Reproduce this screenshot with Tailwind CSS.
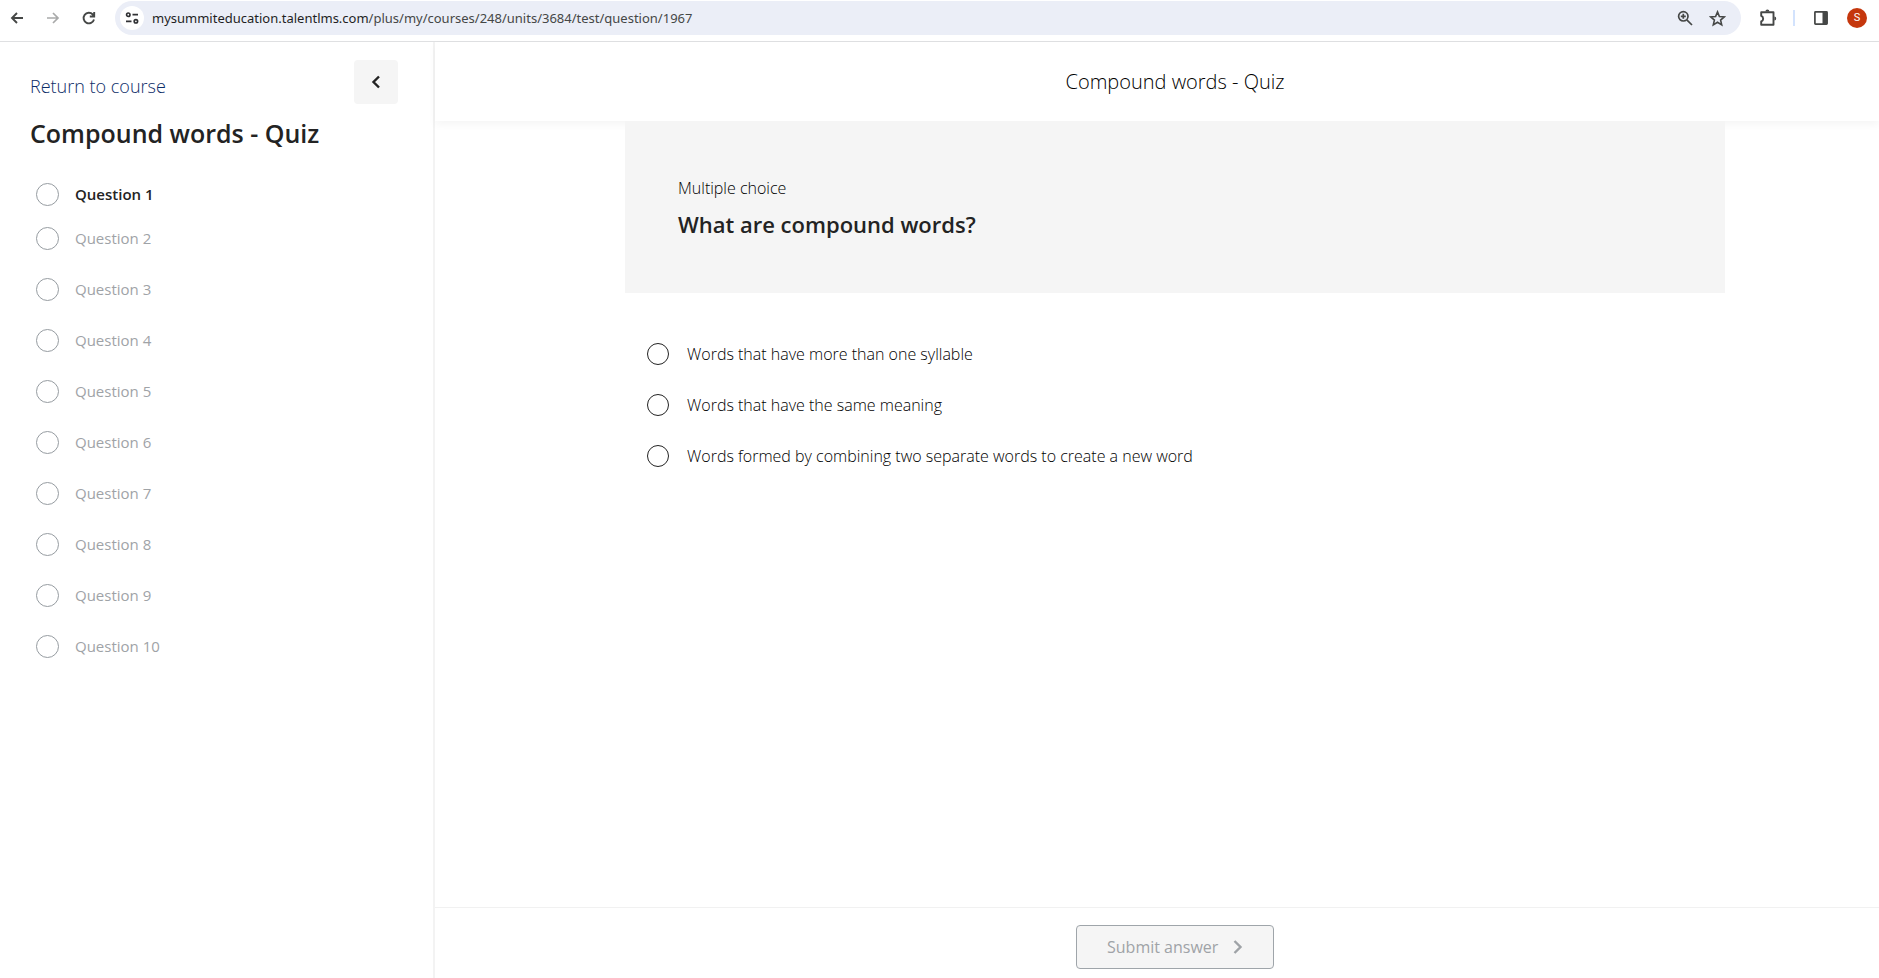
<!DOCTYPE html>
<html lang="en">
<head>
<meta charset="utf-8">
<title>Compound words - Quiz</title>
<script src="https://cdn.jsdelivr.net/npm/@tailwindcss/browser@4"></script>
</head>
<body class="flex h-screen flex-col bg-white font-['Open_Sans',sans-serif] text-[15px] text-[#232323]">
<header class="flex h-[42px] shrink-0 items-start border-b border-[#dfe0e2] pt-px pr-3 text-[#454746]">
  <nav class="flex h-[34px] items-center gap-5 pl-[9px] pr-[18px]" aria-label="Browser">
    <button aria-label="Back"><svg class="size-4" viewBox="0 0 16 16" fill="none" stroke="currentColor" stroke-width="1.9"><path d="M14 8H3M8 3 3 8l5 5"/></svg></button>
    <button aria-label="Forward" class="text-[#a9aaaa]"><svg class="size-4" viewBox="0 0 16 16" fill="none" stroke="currentColor" stroke-width="1.7"><path d="M2 8h11M8 3l5 5-5 5"/></svg></button>
    <button aria-label="Reload"><svg class="size-4" viewBox="0 0 16 16" fill="none" stroke="currentColor" stroke-width="1.9"><path d="M13 9.500A5.300 5.300 0 1 1 11.800 4.500L13 5.800M13.200 2v4.500H8.800"/></svg></button>
  </nav>
  <div class="flex h-[34px] flex-1 items-center rounded-full bg-[#ebeef7] pl-[5px] pr-[15px]">
    <button aria-label="Site information" class="grid size-6 place-items-center rounded-full bg-white"><svg class="h-3 w-[14px]" viewBox="0 0 14 12" fill="none" stroke="#303134" stroke-width="1.7"><circle cx="3.300" cy="2.700" r="1.700"/><path d="M7.500 2.700H13M1 9.300h5.500"/><circle cx="10.900" cy="9.300" r="1.700"/></svg></button>
    <span class="flex-1 pt-px pl-2 font-['Noto_Sans',sans-serif] text-[13px]"><span class="text-[#1f1f1f]">mysummiteducation.talentlms.com</span><span>/plus/my/courses/248/units/3684/test/question/1967</span></span>
    <button aria-label="Zoom" class="mr-4"><svg class="size-4" viewBox="0 0 16 16" fill="none" stroke="currentColor" stroke-width="1.7"><circle cx="6.300" cy="6.300" r="4.700"/><path d="M9.800 9.800 15 15M6.300 3.800v5M3.800 6.300h5"/></svg></button>
    <button aria-label="Bookmark"><svg class="size-[17px]" viewBox="0 0 17 17" fill="none" stroke="currentColor" stroke-width="1.6"><path d="m8.500 1.900 1.900 4.600 4.900.4-3.700 3.200 1.100 4.800-4.200-2.600-4.200 2.600 1.100-4.800L1.700 6.900l4.900-.4Z"/></svg></button>
  </div>
  <div class="flex h-[34px] items-center pl-[18px]">
    <button aria-label="Extensions"><svg class="size-[18px]" viewBox="0 0 18 18" fill="none" stroke="currentColor" stroke-width="1.9" stroke-linejoin="round"><path d="M2.200 3.200h12.300v12.600H2.200v-3.300c2.600-.8 2.600-4.800 0-5.600Z"/><path d="M6.400 2.400a2 1.900 0 0 1 4 0ZM15.400 7.500a1.800 2 0 0 1 0 4Z" fill="currentColor" stroke="none"/></svg></button>
    <span class="ml-4 h-4 w-0.5 bg-[#d3e3fd]"></span>
    <button aria-label="Side panel" class="ml-[18px]"><svg class="size-4" viewBox="0 0 16 16"><rect x="1.900" y="1.900" width="12.200" height="12.200" rx=".6" fill="none" stroke="currentColor" stroke-width="1.7"/><path d="M9.500 2H14v12H9.500Z" fill="currentColor"/></svg></button>
    <button aria-label="Profile" class="ml-[18px] grid size-5 place-items-center rounded-full bg-[#c5370d] font-[Roboto,sans-serif] text-[11px] text-white">S</button>
  </div>
</header>
<div class="flex min-h-0 flex-1">
  <aside class="w-[435px] shrink-0 border-r-2 border-[#f3f3f3] pl-[30px] pr-[35px] pt-[18px]">
    <div class="flex items-start justify-between">
      <a href="#" class="pt-[14px] text-lg leading-6 font-light text-[#0c2c68]">Return to course</a>
      <button aria-label="Collapse sidebar" class="grid size-11 place-items-center rounded bg-[#f5f5f5]"><svg class="h-[14px] w-[10px]" viewBox="0 0 10 14" fill="none" stroke="#232323" stroke-width="2.4"><path d="M8 1.500 2.500 7 8 12.500"/></svg></button>
    </div>
    <h1 class="mt-[11px] text-[25px] leading-9 font-semibold">Compound words - Quiz</h1>
    <ol class="mt-6 pl-[6px] text-[#9fa3a7]">
      <li class="flex h-[38px] items-center"><label class="flex items-center gap-4 font-semibold text-[#232323]"><input type="radio" name="unit" class="size-[23px] appearance-none rounded-full border border-[#969ca1]">Question 1</label></li>
      <li class="flex h-[51px] items-center"><label class="flex items-center gap-4"><input type="radio" name="unit" class="size-[23px] appearance-none rounded-full border border-[#969ca1]">Question 2</label></li>
      <li class="flex h-[51px] items-center"><label class="flex items-center gap-4"><input type="radio" name="unit" class="size-[23px] appearance-none rounded-full border border-[#969ca1]">Question 3</label></li>
      <li class="flex h-[51px] items-center"><label class="flex items-center gap-4"><input type="radio" name="unit" class="size-[23px] appearance-none rounded-full border border-[#969ca1]">Question 4</label></li>
      <li class="flex h-[51px] items-center"><label class="flex items-center gap-4"><input type="radio" name="unit" class="size-[23px] appearance-none rounded-full border border-[#969ca1]">Question 5</label></li>
      <li class="flex h-[51px] items-center"><label class="flex items-center gap-4"><input type="radio" name="unit" class="size-[23px] appearance-none rounded-full border border-[#969ca1]">Question 6</label></li>
      <li class="flex h-[51px] items-center"><label class="flex items-center gap-4"><input type="radio" name="unit" class="size-[23px] appearance-none rounded-full border border-[#969ca1]">Question 7</label></li>
      <li class="flex h-[51px] items-center"><label class="flex items-center gap-4"><input type="radio" name="unit" class="size-[23px] appearance-none rounded-full border border-[#969ca1]">Question 8</label></li>
      <li class="flex h-[51px] items-center"><label class="flex items-center gap-4"><input type="radio" name="unit" class="size-[23px] appearance-none rounded-full border border-[#969ca1]">Question 9</label></li>
      <li class="flex h-[51px] items-center"><label class="flex items-center gap-4"><input type="radio" name="unit" class="size-[23px] appearance-none rounded-full border border-[#969ca1]">Question 10</label></li>
    </ol>
  </aside>
  <main class="flex min-w-0 flex-1 flex-col">
    <h2 class="flex h-[79px] shrink-0 items-center justify-center pl-9 text-xl font-light text-black shadow-[0_4px_8px_rgba(0,0,0,0.04)]">Compound words - Quiz</h2>
    <form id="quiz" class="flex-1 pl-9">
      <div class="mx-auto max-w-[1100px]">
        <div class="relative bg-[#f5f5f5] px-[53px] pt-[55px] pb-[52px]">
          <p class="text-base leading-6 font-light text-black">Multiple choice</p>
          <h3 id="prompt" class="mt-[7px] text-[22px] leading-[34px] font-semibold">What are compound words?</h3>
        </div>
        <fieldset aria-labelledby="prompt" class="flex flex-col gap-[29px] px-[22px] pt-[50px] text-base font-light text-black">
          <label class="flex h-[22px] items-center gap-[18px]"><input type="radio" name="answer" class="size-[22px] appearance-none rounded-full border border-[#232323]">Words that have more than one syllable</label>
          <label class="flex h-[22px] items-center gap-[18px]"><input type="radio" name="answer" class="size-[22px] appearance-none rounded-full border border-[#232323]">Words that have the same meaning</label>
          <label class="flex h-[22px] items-center gap-[18px]"><input type="radio" name="answer" class="size-[22px] appearance-none rounded-full border border-[#232323]">Words formed by combining two separate words to create a new word</label>
        </fieldset>
      </div>
    </form>
    <footer class="flex h-[71px] shrink-0 items-start justify-center border-t border-[#f1f1f1] pt-[17px] pl-9">
      <button form="quiz" disabled class="flex h-11 w-[198px] items-center justify-between rounded border border-[#9fa5aa] bg-[#f5f5f5] px-[30px] text-base text-[#9fa3a7]">Submit answer<svg class="h-[14px] w-[10px]" viewBox="0 0 10 14" fill="none" stroke="currentColor" stroke-width="2.4"><path d="m1.500 1 6 6-6 6"/></svg></button>
    </footer>
  </main>
</div>
</body>
</html>
